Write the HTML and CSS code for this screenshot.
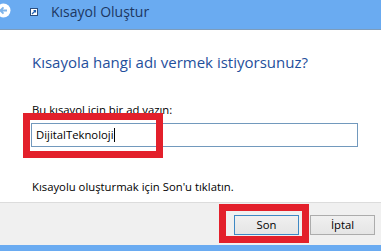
FILE: index.html
```html
<!DOCTYPE html>
<html lang="tr">
<head>
<meta charset="utf-8">
<title>Kısayol Oluştur</title>
<link rel="stylesheet" href="styles.css">
</head>
<body>
<div class="window">
  <header class="titlebar">
    <svg class="back" width="15" height="15" viewBox="0 0 15 15">
      <circle cx="7.5" cy="7.5" r="7" fill="#ffffff"/>
      <path d="M11 7.5H4.5M7.5 4.3L4.3 7.5L7.5 10.7" fill="none" stroke="#7fb4ea" stroke-width="1.8"/>
    </svg>
    <svg class="appicon" width="8" height="8" viewBox="0 0 8 8">
      <rect x="0.5" y="0.5" width="7" height="7" fill="#ffffff" stroke="#2b4f80"/>
      <path d="M2 6L5.5 2.5M3.5 2.5H5.5V4.5" fill="none" stroke="#1f5fb0" stroke-width="1.2"/>
    </svg>
    <span class="title">Kısayol Oluştur</span>
  </header>
  <main class="content">
    <h1 class="heading">Kısayola hangi adı vermek istiyorsunuz?</h1>
    <label class="label" for="name">Bu kısayol için bir ad yazın:</label>
    <div class="field">
      <div class="input" id="name">DijitalTeknoloji<span class="caret"></span></div>
      <div class="mark mark-input"></div>
    </div>
    <p class="hint">Kısayolu oluşturmak için Son'u tıklatın.</p>
  </main>
  <footer class="footer">
    <div class="btnwrap">
      <button class="btn btn-default">Son</button>
      <div class="mark mark-btn"></div>
    </div>
    <button class="btn">İptal</button>
  </footer>
  <div class="bottombar"></div>
</div>
</body>
</html>
```

FILE: styles.css
```css
* { box-sizing: border-box; }
html, body { margin: 0; padding: 0; }
body {
  width: 381px;
  height: 251px;
  overflow: hidden;
  background: #ffffff;
  font-family: "Open Sans", "Noto Sans", "DejaVu Sans", sans-serif;
  color: #000;
}
.window {
  display: flex;
  flex-direction: column;
  height: 251px;
}
.titlebar {
  height: 30px;
  background: #6aabf1;
  border-bottom: 1px solid #7d9cbb;
  display: flex;
  align-items: flex-start;
  flex-shrink: 0;
}
.back {
  margin-left: -4px;
  margin-top: 3px;
  display: block;
}
.appicon {
  margin-left: 19px;
  margin-top: 8px;
  display: block;
}
.title {
  margin-left: 13px;
  margin-top: 3px;
  font-size: 14px;
  line-height: 18px;
  color: #1d3762;
}
.content {
  flex: 1;
  padding: 22px 23px 0 31px;
}
.heading {
  margin: 0;
  font-weight: normal;
  font-size: 15px;
  line-height: 20px;
  color: #1f4f9c;
  padding-left: 1px;
}
.label {
  display: block;
  margin-top: 30px;
  font-size: 11.3px;
  line-height: 16px;
  padding-left: 1px;
}
.field {
  position: relative;
  margin-top: 5px;
}
.input {
  width: 327px;
  height: 24px;
  border: 1px solid #7299bd;
  padding: 0 4px;
  font-size: 11.3px;
  line-height: 22px;
  display: flex;
  align-items: center;
}
.caret {
  display: inline-block;
  width: 1px;
  height: 14px;
  background: #000;
  margin-left: 1px;
}
.mark {
  position: absolute;
  border: 7px solid #e3202b;
  pointer-events: none;
}
.mark-input {
  left: -8px;
  top: -10px;
  width: 140px;
  height: 45px;
}
.hint {
  margin: 32px 0 0;
  font-size: 11.3px;
  line-height: 16px;
  padding-left: 1px;
}
.footer {
  height: 43px;
  background: #f0f0f0;
  border-top: 1px solid #dcdcdc;
  display: flex;
  justify-content: flex-end;
  align-items: flex-start;
  padding: 12px 6px 0 0;
  gap: 11px;
  flex-shrink: 0;
}
.btnwrap {
  position: relative;
}
.btn {
  width: 65px;
  height: 20px;
  padding: 0;
  margin: 0;
  font-family: inherit;
  font-size: 11.3px;
  line-height: 18px;
  color: #000;
  background: linear-gradient(#f0f0f0, #e5e5e5);
  border: 1px solid #acacac;
  display: block;
}
.btn-default {
  border-color: #3e88c4;
}
.mark-btn {
  left: -15px;
  top: -11px;
  width: 90px;
  height: 39px;
}
.bottombar {
  height: 6px;
  background: #6aabf1;
  flex-shrink: 0;
}
```
